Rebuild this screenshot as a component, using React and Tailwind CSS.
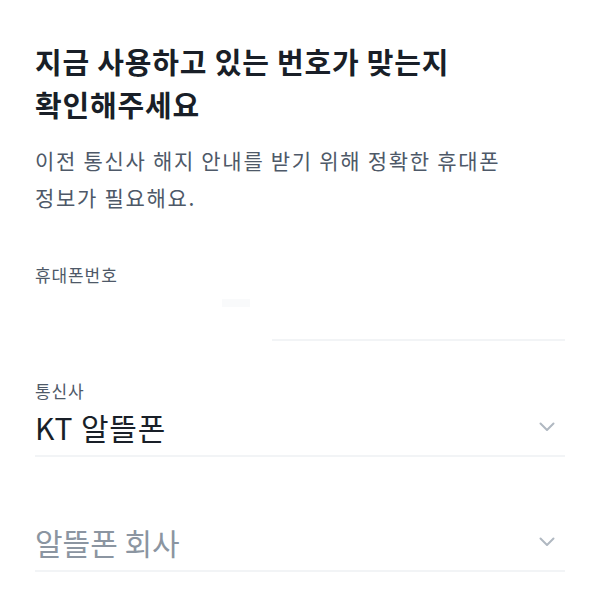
import React from "react";

const Chevron = () => (
  <svg width="16" height="10" viewBox="0 0 16 10" fill="none" className="shrink-0">
    <path d="M1.5 1.5l6.5 6.5 6.5-6.5" stroke="#b0b8c1" strokeWidth="2" strokeLinecap="round" strokeLinejoin="round" />
  </svg>
);

const SelectField = ({ label, value, placeholder }) => (
  <div className="flex flex-col">
    {label ? (
      <span className="text-[17px] leading-[24px] tracking-[0.9px] text-[#4e5968]">{label}</span>
    ) : null}
    <div className="flex items-center justify-between border-b-2 border-[#f2f4f6] pt-[4px] pb-[8px] pr-[10px]">
      <span
        className={
          value
            ? "text-[30px] leading-[40px] tracking-[0.8px] text-[#191f28]"
            : "text-[30px] leading-[40px] text-[#8b95a1]"
        }
      >
        {value || placeholder}
      </span>
      <Chevron />
    </div>
  </div>
);

const App = () => {
  return (
    <div
      className="w-full min-h-[606px] bg-white px-[35px] pt-[40px]"
      style={{ fontFamily: '"Noto Sans CJK KR", "Noto Sans", sans-serif' }}
    >
      <h1 className="text-[29px] leading-[43px] tracking-[0.8px] font-bold text-[#191f28]">
        지금 사용하고 있는 번호가 맞는지
        <br />
        확인해주세요
      </h1>
      <p className="mt-[16px] text-[21px] leading-[37px] tracking-[1.7px] text-[#4e5968]">
        이전 통신사 해지 안내를 받기 위해 정확한 휴대폰
        <br />
        정보가 필요해요.
      </p>

      <div className="mt-[47px] flex flex-col">
        <span className="text-[17px] leading-[24px] tracking-[0.9px] text-[#4e5968]">휴대폰번호</span>
        <div className="flex gap-[22px] h-[54px]">
          <div className="w-[215px] flex justify-end pt-[12px]">
            <div className="w-[28px] h-[8px] bg-[#f9fafb]" />
          </div>
          <div className="flex-1 border-b-2 border-[#f2f4f6]" />
        </div>
      </div>

      <div className="mt-[38px]">
        <SelectField label="통신사" value="KT 알뜰폰" />
      </div>

      <div className="mt-[61px]">
        <SelectField placeholder="알뜰폰 회사" />
      </div>
    </div>
  );
};

export default App;
